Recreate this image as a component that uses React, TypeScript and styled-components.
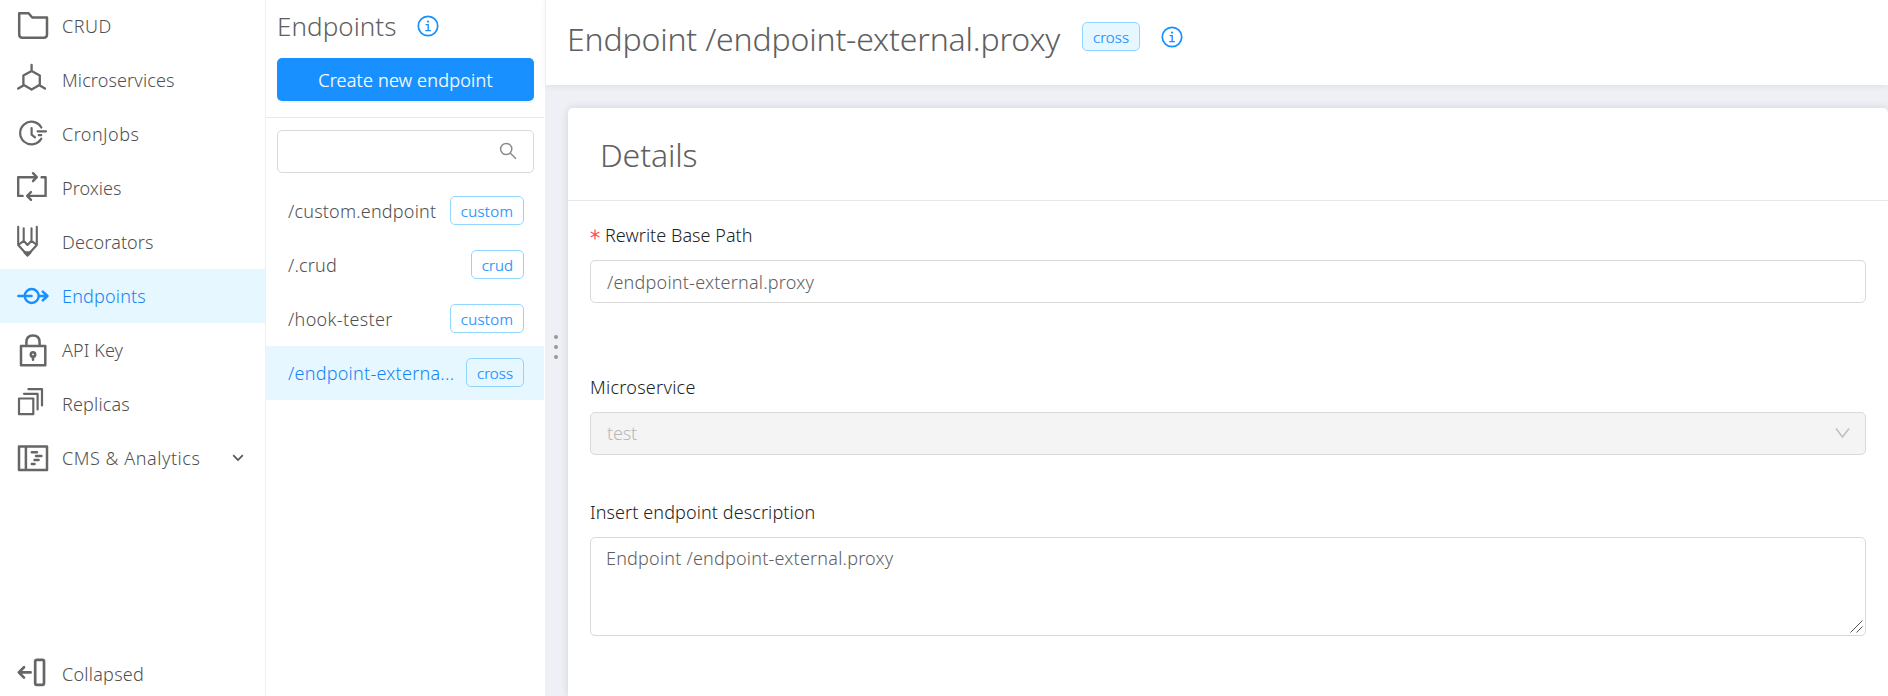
import React from 'react';
import styled, { createGlobalStyle, css } from 'styled-components';

const Global = createGlobalStyle`
  *, *::before, *::after { box-sizing: border-box; }
  body { margin: 0; overflow: hidden; background: #eff0f5; }
  body, input, textarea, button {
    font-family: "Noto Sans", "Open Sans", sans-serif;
    font-size: 18px;
    font-weight: 300;
  }
`;

const Label = styled.span<{ $track?: number }>`
  white-space: nowrap;
  letter-spacing: ${p => p.$track ?? 0}px;
`;

const Shell = styled.div`
  display: flex;
  height: 696px;
  overflow: hidden;
  color: #505050;
`;

const Sidebar = styled.nav`
  display: flex;
  flex-direction: column;
  flex: none;
  width: 266px;
  height: 702px;
  margin-top: -1px;
  background: #fff;
  border-right: 1px solid #f0f0f0;
`;

const NavItem = styled.a<{ $active?: boolean }>`
  display: flex;
  align-items: center;
  flex: none;
  height: 54px;
  padding: 0 21px 0 16px;
  color: ${p => (p.$active ? '#1585f5' : '#505050')};
  background: ${p => (p.$active ? '#e6f7ff' : 'transparent')};
`;

const NavIcon = styled.svg`
  flex: none;
  width: 34px;
  height: 34px;
  margin-right: 12px;
  fill: none;
  stroke: ${p => p.color ?? '#666'};
  stroke-width: 2.5;
  stroke-linecap: round;
  stroke-linejoin: round;
`;

const Chevron = styled.svg`
  width: 12px;
  height: 12px;
  margin: 0 0 1px auto;
  fill: none;
  stroke: #555;
  stroke-width: 1.7;
`;

const Spacer = styled.div`
  flex: 1;
`;

const ListPanel = styled.section`
  display: flex;
  flex-direction: column;
  flex: none;
  width: 279px;
  padding-right: 1px;
  background: #fff;
`;

const ListHeader = styled.header`
  height: 118px;
  padding: 0 10px 0 11px;
  border-bottom: 1px solid #e8e8e8;
`;

const ListTitle = styled.div`
  display: flex;
  align-items: center;
  justify-content: flex-start;
  height: 58px;
  padding-bottom: 6px;
  gap: 20px;
  font-size: 26px;
  color: #606060;
`;

const PrimaryButton = styled.button`
  display: block;
  width: 257px;
  height: 43px;
  padding: 1px 0 0;
  border: 0;
  border-radius: 5px;
  background: #1890ff;
  color: #fff;
  -webkit-text-stroke: 0.2px #fff;
  box-shadow: 0 2px 0 rgba(0, 0, 0, 0.045);
`;

const SearchBox = styled.div`
  display: flex;
  align-items: center;
  justify-content: flex-end;
  width: 257px;
  height: 43px;
  margin: 12px 0 11px 11px;
  padding: 0 16px 1px 0;
  border: 1px solid #d9d9d9;
  border-radius: 5px;
`;

const SearchIcon = styled.svg`
  width: 18px;
  height: 18px;
  fill: none;
  stroke: #8c8c8c;
  stroke-width: 1.5;
`;

const EndpointRow = styled.a<{ $active?: boolean }>`
  display: flex;
  align-items: center;
  justify-content: space-between;
  height: 54px;
  padding: 0 20px 0 22px;
  color: ${p => (p.$active ? '#1585f5' : '#505050')};
  background: ${p => (p.$active ? '#e6f7ff' : 'transparent')};
`;

const Tag = styled.span<{ $width: number; $filled?: boolean }>`
  display: flex;
  align-items: center;
  justify-content: center;
  flex: none;
  width: ${p => p.$width}px;
  height: 29px;
  padding-top: 1px;
  border: 1px solid #91d5ff;
  border-radius: 5px;
  font-size: 15px;
  line-height: 20px;
  color: #1890ff;
  -webkit-text-stroke: 0.2px #1890ff;
  ${p => p.$filled && css`background: #e6f7ff;`}
`;

const EndpointTag = styled(Tag)`
  margin-top: -1px;
`;

const Main = styled.main`
  display: flex;
  flex-direction: column;
  flex: 1;
  min-width: 0;
`;

const PageHeader = styled.header`
  display: flex;
  align-items: center;
  flex: none;
  height: 85px;
  padding: 0 0 12px 19px;
  border-left: 1px solid #eff0f2;
  background: #fff;
  box-shadow: 0 2px 6px rgba(0, 0, 0, 0.06);
`;

const PageTitle = styled.h1`
  width: 517px;
  margin: 0;
  padding: 4px 0 0 2px;
  font-size: 32px;
  font-weight: 300;
  line-height: 44px;
  color: #606060;
`;

const InfoIcon = styled.svg`
  flex: none;
  width: 22px;
  height: 22px;
  fill: none;
  stroke: #1890ff;
`;

const HeaderInfo = styled.span`
  display: flex;
  margin-left: 21px;
`;

const Body = styled.div`
  display: flex;
  flex: 1;
  min-height: 0;
  padding-top: 23px;
`;

const DragHandle = styled.div`
  display: flex;
  flex-direction: column;
  flex: none;
  width: 23px;
  padding: 227px 1px 0 0;
  align-items: center;
  gap: 6px;
`;

const Dot = styled.i`
  width: 4px;
  height: 4px;
  border-radius: 50%;
  background: #999;
`;

const Card = styled.section`
  flex: 1;
  min-width: 0;
  border-radius: 5px 5px 0 0;
  background: #fff;
  box-shadow: 0 0 8px rgba(0, 0, 0, 0.12);
`;

const CardTitle = styled.h2`
  display: flex;
  align-items: center;
  height: 93px;
  margin: 0;
  padding: 0 0 0 32px;
  border-bottom: 1px solid #e8e8e8;
  font-size: 32px;
  font-weight: 300;
  color: #606060;
`;

const Form = styled.form`
  display: flex;
  flex-direction: column;
  padding: 21px 22px 0;
`;

const Field = styled.div<{ $gap?: number }>`
  display: flex;
  flex-direction: column;
  margin-bottom: ${p => p.$gap ?? 0}px;
`;

const FieldLabel = styled.label`
  display: flex;
  align-items: center;
  height: 26px;
  margin-bottom: 12px;
  color: #222;
`;

const Required = styled.svg`
  width: 10px;
  height: 11px;
  margin: 0 5px 2px 0;
  fill: none;
  stroke: #ff4d4f;
  stroke-width: 1.3;
`;

const control = css`
  width: 100%;
  border: 1px solid #d9d9d9;
  border-radius: 5px;
  outline: 0;
  background: #fff;
  color: #606060;
`;

const TextInput = styled.input`
  ${control}
  height: 43px;
  padding: 0 15px 0 16px;
  letter-spacing: 0.22px;
`;

const Select = styled.div`
  ${control}
  display: flex;
  align-items: center;
  justify-content: space-between;
  height: 43px;
  padding: 0 15px 2px 16px;
  background: #f4f4f4;
  color: #b8b8b8;
`;

const SelectArrow = styled.svg`
  width: 15px;
  height: 12px;
  fill: none;
  stroke: #bfbfbf;
  stroke-width: 1.5;
`;

const TextAreaFrame = styled.div`
  position: relative;
`;

const TextArea = styled.textarea`
  ${control}
  display: block;
  height: 99px;
  padding: 7px 15px;
  line-height: 27px;
  letter-spacing: 0.21px;
  resize: none;
`;

const Grip = styled.svg`
  position: absolute;
  right: 3px;
  bottom: 3px;
  width: 13px;
  height: 13px;
  stroke: #555;
  stroke-width: 1;
`;

const Info = () => (
  <InfoIcon viewBox="0 0 22 22">
    <circle cx="11" cy="11" r="9.7" strokeWidth="1.7" />
    <path d="M8.6 9.6h2.6v5.8M8.3 15.6h5.6" strokeWidth="1.4" />
    <circle cx="11" cy="6.6" r="1.1" fill="#1890ff" stroke="none" />
  </InfoIcon>
);

type NavEntry = { name: string; track: number; icon: React.ReactNode; active?: boolean; expandable?: boolean };

const nav: NavEntry[] = [
  {
    name: 'CRUD', track: 0.5,
    icon: <path d="M3.2 4.3H12.6L16.2 8.5H31V25.5Q31 28.7 27.8 28.7H6.4Q3.2 28.7 3.2 25.5Z" />,
  },
  {
    name: 'Microservices', track: 0.13,
    icon: <path d="M15.6 1.8V8M15.6 8L23.8 12.4V21.8L15.6 26.6L7.4 21.8V12.4ZM7.4 22.4L2.2 25.6M23.8 22.4L29 25.6" strokeWidth="2.3" />,
  },
  {
    name: 'CronJobs', track: 0.45,
    icon: <path d="M25.3 10.5A11.3 11.3 0 1 0 25.3 21.6M15.6 11V17.6L19 20.4M21.6 14.3H30M22.8 18.2H25.2" strokeWidth="2.2" />,
  },
  {
    name: 'Proxies', track: 0.05,
    icon: <path d="M20.8 6.2H2.2V24.9H6.6M17 2.2L20.8 6.2L17 10.2M25.6 6.2H29.6V24.9H11.2M15 21L11.2 24.9L15 28.8" strokeWidth="2.4" />,
  },
  {
    name: 'Decorators', track: 0.1,
    icon: (
      <>
        <path d="M2.2 1.7V20L11.5 30.3L20.8 20V1.7M7.7 3.2V15.8M15.5 3.2V15.8M3 19.5L7.7 15.8L11.5 20L15.5 15.8L20.3 19.5" strokeWidth="2.1" />
        <path d="M8.8 27.6H14.2L11.5 30.3Z" fill="#666" />
      </>
    ),
  },
  {
    name: 'Endpoints', track: 0.18, active: true,
    icon: (
      <>
        <path d="M2.4 17H15.5M23.2 17H31M26.8 12.6L31.4 17L26.8 21.4" strokeWidth="2.6" />
        <circle cx="15.7" cy="17" r="7" strokeWidth="2.4" />
      </>
    ),
  },
  {
    name: 'API Key', track: 0.1,
    icon: (
      <>
        <path d="M5 13H29.3V32.2H5ZM10.4 13V9.2Q10.4 2.4 17 2.4Q23.6 2.4 23.6 9.2V13" />
        <circle cx="17" cy="21.5" r="2.2" strokeWidth="2.6" />
        <path d="M17 23.8V26.8" />
      </>
    ),
  },
  {
    name: 'Replicas', track: 0.17,
    icon: <path d="M3 11.5H17.3V27.2H3ZM8 6.8H21.6V22.4M12.4 2.2H26V18.4" strokeWidth="2.2" />,
  },
  {
    name: 'CMS & Analytics', track: 0.54, expandable: true,
    icon: (
      <>
        <path d="M3 5.6H31V29H3ZM9.9 5.6V29" />
        <path d="M15.8 11.2H21M20 15H25.4M18.5 19H22.6M15.8 23H18.6" strokeWidth="2.4" />
      </>
    ),
  },
];

const endpoints = [
  { path: '/custom.endpoint', track: 0.2, tag: 'custom', tagTrack: 0.35, width: 74 },
  { path: '/.crud', track: 0.2, tag: 'crud', tagTrack: 0.1, width: 53 },
  { path: '/hook-tester', track: 0.34, tag: 'custom', tagTrack: 0.35, width: 74 },
  { path: '/endpoint-externa...', track: 0.25, tag: 'cross', tagTrack: 0.1, width: 58, active: true },
];

export default function App() {
  return (
    <>
      <Global />
      <Shell>
        <Sidebar>
          {nav.map(item => (
            <NavItem key={item.name} $active={item.active}>
              <NavIcon viewBox="0 0 34 34" color={item.active ? '#1890ff' : '#666'}>{item.icon}</NavIcon>
              <Label $track={item.track}>{item.name}</Label>
              {item.expandable && (
                <Chevron viewBox="0 0 12 12"><path d="M1.2 3.2L6 8L10.8 3.2" /></Chevron>
              )}
            </NavItem>
          ))}
          <Spacer />
          <NavItem>
            <NavIcon viewBox="0 0 34 34">
              <path d="M14.6 15.4H3.2M8 10.2L2.8 15.4L8 20.6" strokeWidth="2.7" />
              <rect x="19.2" y="2.8" width="8.8" height="25" rx="1.5" strokeWidth="2.7" />
            </NavIcon>
            <Label $track={0.25}>Collapsed</Label>
          </NavItem>
        </Sidebar>

        <ListPanel>
          <ListHeader>
            <ListTitle>
              <Label $track={0.06}>Endpoints</Label>
              <Info />
            </ListTitle>
            <PrimaryButton><Label $track={0.22}>Create new endpoint</Label></PrimaryButton>
          </ListHeader>
          <SearchBox>
            <SearchIcon viewBox="0 0 18 18">
              <circle cx="7.2" cy="7" r="5.6" />
              <path d="M11.2 11L17 16.8" />
            </SearchIcon>
          </SearchBox>
          {endpoints.map(e => (
            <EndpointRow key={e.path} $active={e.active}>
              <Label $track={e.track}>{e.path}</Label>
              <EndpointTag $width={e.width}><Label $track={e.tagTrack}>{e.tag}</Label></EndpointTag>
            </EndpointRow>
          ))}
        </ListPanel>

        <Main>
          <PageHeader>
            <PageTitle><Label $track={-0.17}>Endpoint /endpoint-external.proxy</Label></PageTitle>
            <Tag $width={58} $filled><Label $track={0.1}>cross</Label></Tag>
            <HeaderInfo><Info /></HeaderInfo>
          </PageHeader>
          <Body>
            <DragHandle><Dot /><Dot /><Dot /></DragHandle>
            <Card>
              <CardTitle><Label $track={-0.13}>Details</Label></CardTitle>
              <Form>
                <Field $gap={71}>
                  <FieldLabel>
                    <Required viewBox="0 0 10 11"><path d="M5 0.5V10.5M0.7 3L9.3 8M9.3 3L0.7 8" /></Required>
                    <Label $track={0.04}>Rewrite Base Path</Label>
                  </FieldLabel>
                  <TextInput defaultValue="/endpoint-external.proxy" />
                </Field>
                <Field $gap={44}>
                  <FieldLabel><Label $track={0.27}>Microservice</Label></FieldLabel>
                  <Select>
                    <Label $track={-0.2}>test</Label>
                    <SelectArrow viewBox="0 0 15 12"><path d="M1 1.5L7.5 10L14 1.5" /></SelectArrow>
                  </Select>
                </Field>
                <Field>
                  <FieldLabel><Label $track={0.1}>Insert endpoint description</Label></FieldLabel>
                  <TextAreaFrame>
                    <TextArea defaultValue="Endpoint /endpoint-external.proxy" spellCheck={false} />
                    <Grip viewBox="0 0 13 13"><path d="M0.5 12.5L12.5 0.5M6.5 12.5L12.5 6.5" /></Grip>
                  </TextAreaFrame>
                </Field>
              </Form>
            </Card>
          </Body>
        </Main>
      </Shell>
    </>
  );
}
